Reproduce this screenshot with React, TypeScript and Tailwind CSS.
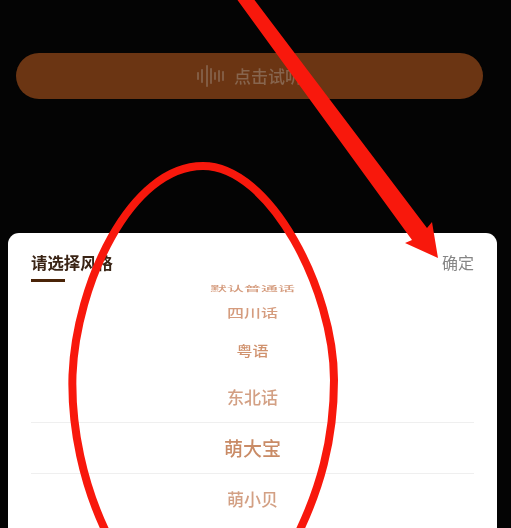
import React from 'react';

const FONT = "font-['Noto_Sans_CJK_SC','Noto_Sans',sans-serif]";

const WAVE_BARS = [
    { x: 1, h: 8 },
    { x: 5, h: 14 },
    { x: 10, h: 22 },
    { x: 14, h: 16 },
    { x: 18, h: 8 },
    { x: 22, h: 12 },
    { x: 26, h: 10 },
];

const WaveIcon = () => (
    <svg width="27" height="24" viewBox="0 0 27 24" className="blur-[0.5px]" aria-hidden="true">
        {WAVE_BARS.map((bar) => (
            <rect key={bar.x} x={bar.x - 0.75} y={12 - bar.h / 2} width="1.5" height={bar.h} rx="0.75" fill="#8a6a55" />
        ))}
    </svg>
);

export default function App() {
    return (
        <div className={`relative flex h-[528px] w-[511px] flex-col overflow-hidden bg-[#040404] ${FONT}`}>
            <button className="mx-4 mt-[53px] flex h-[46px] w-[467px] shrink-0 items-center justify-center gap-[10px] rounded-[23px] bg-[#6b3513]">
                <WaveIcon />
                <span className="text-[17px] font-medium text-[#87654e] blur-[0.5px]">点击试听</span>
            </button>

            <div className="mx-2 mt-[134px] flex w-[489px] flex-1 flex-col rounded-t-[11px] bg-white px-[23px]">
                <div className="flex items-start justify-between pt-[18px]">
                    <div className="flex flex-col">
                        <span className="text-[16.4px] leading-[22px] font-bold text-[#3a2415] blur-[0.3px]">请选择风格</span>
                        <div className="mt-[6px] h-[3px] w-[34px] bg-[#4a2408]" />
                    </div>
                    <span className="text-[16px] leading-[22px] text-[#858585] blur-[0.3px]">确定</span>
                </div>

                <div className="flex flex-col text-center font-medium text-[#d59c7e] blur-[0.4px]">
                    <div className="flex h-[12px] items-center justify-center">
                        <span className="scale-y-[0.4] text-[17px] leading-[20px]">默认普通话</span>
                    </div>
                    <div className="flex h-[38px] items-center justify-center">
                        <span className="scale-y-[0.72] text-[17px] leading-[20px]">四川话</span>
                    </div>
                    <div className="flex h-[36px] items-center justify-center">
                        <span className="scale-y-[0.88] text-[16px] leading-[20px] text-[#d0926e]">粤语</span>
                    </div>
                    <div className="flex h-[54px] items-center justify-center pt-1">
                        <span className="text-[17px] leading-[22px] text-[#d3a084]">东北话</span>
                    </div>
                    <div className="flex h-[52px] items-center justify-center border-y border-[#efefef]">
                        <span className="text-[19px] leading-[26px] text-[#c98b66]">萌大宝</span>
                    </div>
                    <div className="flex h-[50px] items-center justify-center">
                        <span className="text-[17px] leading-[22px] text-[#d3a084]">萌小贝</span>
                    </div>
                </div>
            </div>

            {/* red annotations drawn over the screenshot */}
            <svg className="absolute inset-0" width="511" height="528" viewBox="0 0 511 528" fill="none" aria-hidden="true">
                <polygon points="236,-2 253,-2 427,228 432,222 438,258 405,243 412,240" fill="#f8180c" />
                <path
                    d="M110 540 C82 485 71 425 72.5 375 C76 285 130 166 203 166 C270 166 334 290 334 380 C334 440 320 490 295 540"
                    stroke="#f8180c"
                    strokeWidth="8"
                />
            </svg>
        </div>
    );
}
